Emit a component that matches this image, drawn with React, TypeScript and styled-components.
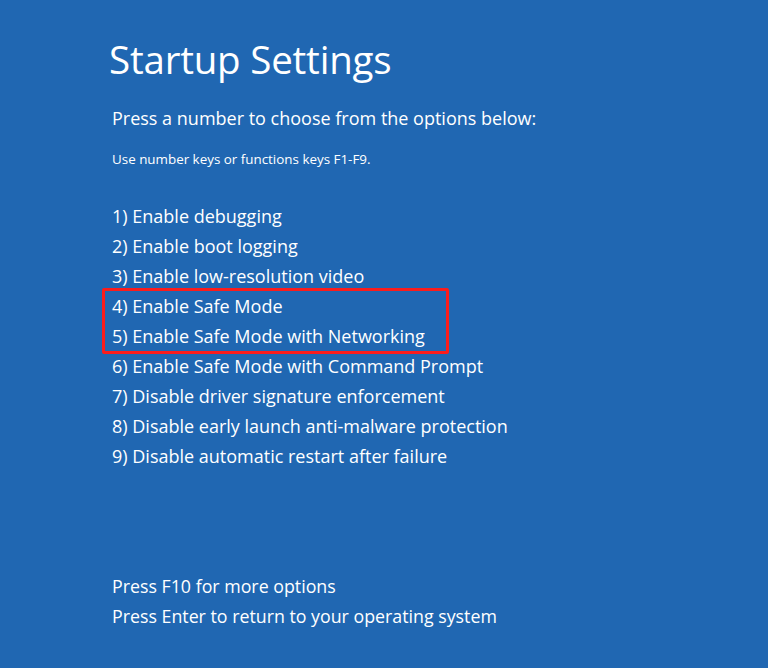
import React from "react";
import styled, { createGlobalStyle } from "styled-components";

const Global = createGlobalStyle`
  html, body { margin: 0; padding: 0; }
  body {
    background: #2067b2;
    font-family: "Open Sans", "Noto Sans", "Liberation Sans", sans-serif;
    color: #ffffff;
  }
`;

const Screen = styled.main`
  width: 768px;
  height: 668px;
  box-sizing: border-box;
  background: #2067b2;
  padding: 32px 0 0 112px;
  display: flex;
  flex-direction: column;
  overflow: hidden;
`;

const Title = styled.h1`
  margin: 0 0 0 -3px;
  font-weight: 400;
  font-size: 38.5px;
  line-height: 54px;
  letter-spacing: -0.2px;
`;

const Lead = styled.p`
  margin: 20px 0 0;
  font-size: 18px;
  line-height: 24px;
`;

const Hint = styled.p`
  margin: 20px 0 0;
  font-size: 13.4px;
  line-height: 18px;
`;

const OptionList = styled.ol`
  list-style: none;
  margin: 33px 0 0;
  padding: 0;
  display: flex;
  flex-direction: column;
`;

const Option = styled.li`
  font-size: 18px;
  line-height: 30px;
  white-space: nowrap;
`;

const Highlight = styled.div`
  margin: -3px 0 -3px -10px;
  width: 347px;
  height: 66px;
  box-sizing: border-box;
  border: 3px solid #fb1c1c;
  border-radius: 2px;
  padding: 0 0 0 7px;
  display: flex;
  flex-direction: column;
  justify-content: center;
`;

const Footer = styled.div`
  margin-top: 100px;
  display: flex;
  flex-direction: column;
`;

const FooterLine = styled.p`
  margin: 0;
  font-size: 17.8px;
  line-height: 30px;
`;

const before = [
  "1) Enable debugging",
  "2) Enable boot logging",
  "3) Enable low-resolution video",
];
const highlighted = ["4) Enable Safe Mode", "5) Enable Safe Mode with Networking"];
const after = [
  "6) Enable Safe Mode with Command Prompt",
  "7) Disable driver signature enforcement",
  "8) Disable early launch anti-malware protection",
  "9) Disable automatic restart after failure",
];

export default function App() {
  return (
    <>
      <Global />
      <Screen>
        <Title>Startup Settings</Title>
        <Lead>Press a number to choose from the options below:</Lead>
        <Hint>Use number keys or functions keys F1-F9.</Hint>
        <OptionList>
          {before.map((t) => (
            <Option key={t}>{t}</Option>
          ))}
          <Highlight>
            {highlighted.map((t) => (
              <Option key={t}>{t}</Option>
            ))}
          </Highlight>
          {after.map((t) => (
            <Option key={t}>{t}</Option>
          ))}
        </OptionList>
        <Footer>
          <FooterLine>Press F10 for more options</FooterLine>
          <FooterLine>Press Enter to return to your operating system</FooterLine>
        </Footer>
      </Screen>
    </>
  );
}
